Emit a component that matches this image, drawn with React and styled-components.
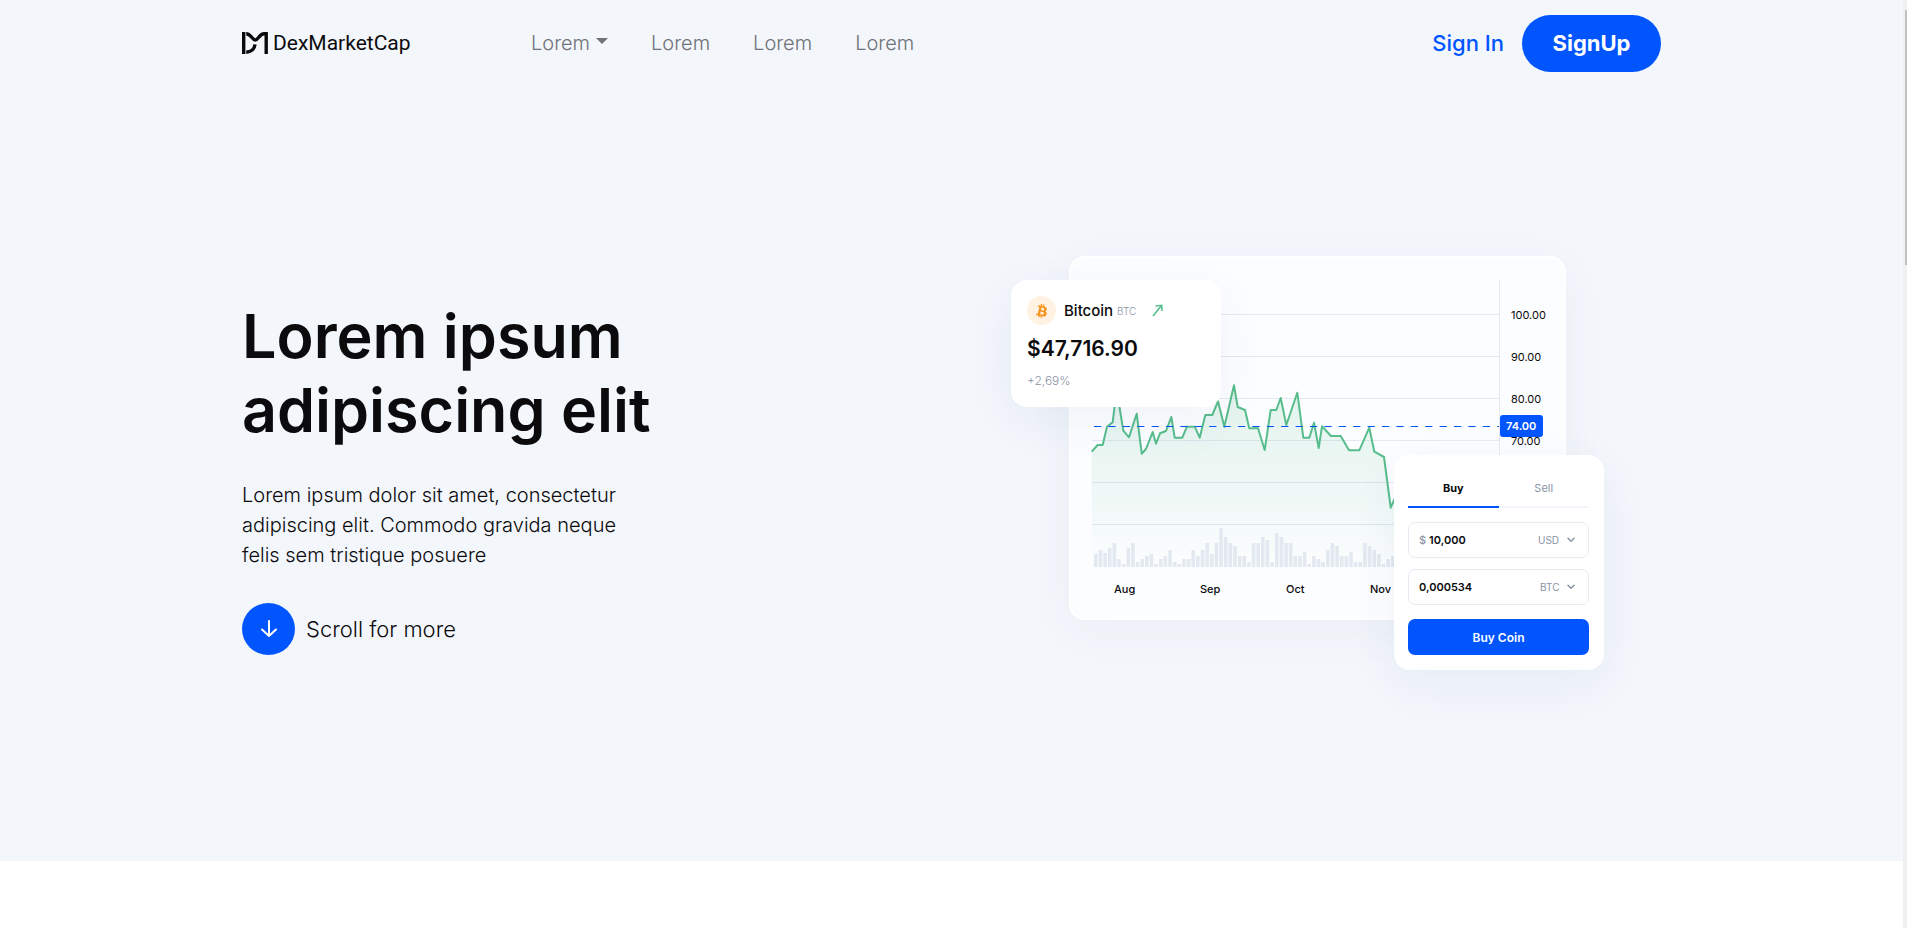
import React from 'react';
import styled, { createGlobalStyle } from 'styled-components';
import { FaBtc } from 'react-icons/fa';

const blue = '#0055ff';
const ink = '#0b0b0d';
const muted = '#8a94a6';

const GlobalStyle = createGlobalStyle`
  *, *::before, *::after { box-sizing: border-box; }
  body {
    margin: 0;
    background: #fff;
    color: ${ink};
    font-family: Inter, "Liberation Sans", sans-serif;
  }
  button, input, select { font-family: inherit; }
  a { color: inherit; text-decoration: none; }
`;

const Page = styled.div`
  margin-right: 4px;
`;

const ScrollTrack = styled.div`
  position: fixed;
  inset: 0 0 0 auto;
  width: 4px;
  padding: 10px 0 0 2px;
  background: #f1f1f1;
`;

const ScrollThumb = styled.div`
  height: 255px;
  background: #c1c1c1;
`;

const Banner = styled.div`
  background: #f3f6fb;
`;

const Container = styled.div`
  max-width: 1419px;
  margin: 0 auto;
`;

const Header = styled(Container).attrs({ as: 'header' })`
  display: flex;
  align-items: center;
  height: 86px;
`;

const Brand = styled.a`
  display: flex;
  align-items: center;
  gap: 5px;
  width: 289px;
  font-family: Roboto, sans-serif;
  font-size: 21px;
  line-height: 24px;
`;

const Nav = styled.nav`
  display: flex;
  align-items: center;
  gap: 43px;
`;

const NavLink = styled.a`
  display: flex;
  align-items: center;
  gap: 6px;
  font-size: 20px;
  line-height: 24px;
  font-weight: 300;
  color: #6f7278;
`;

const Caret = styled.span`
  margin-bottom: 4px;
  border: 6px solid transparent;
  border-top-color: #6f7278;
  border-bottom: 0;
`;

const Account = styled.div`
  display: flex;
  align-items: center;
  gap: 18px;
  margin-left: auto;
`;

const SignIn = styled.a`
  font-size: 22px;
  line-height: 28px;
  font-weight: 500;
  color: ${blue};
`;

const SignUp = styled.button`
  width: 139px;
  height: 57px;
  border: 0;
  border-radius: 29px;
  background: ${blue};
  color: #fff;
  font-size: 22px;
  line-height: 28px;
  font-weight: 700;
  padding: 0;
`;

const Hero = styled(Container).attrs({ as: 'main' })`
  display: grid;
  grid-template-columns: 1fr 1fr;
  align-items: start;
  padding: 170px 0 191px;
`;

const Intro = styled.section`
  padding-top: 43px;
`;

const Title = styled.h1`
  max-width: 480px;
  margin: 0 0 33px;
  font-size: 61px;
  line-height: 74px;
  font-weight: 600;
`;

const Lead = styled.p`
  max-width: 400px;
  margin: 0 0 33px;
  font-size: 20px;
  line-height: 30px;
  font-weight: 300;
`;

const ScrollLink = styled.a`
  display: inline-flex;
  align-items: center;
  gap: 11px;
  font-size: 22px;
  line-height: 28px;
  font-weight: 300;
`;

const RoundIcon = styled.span`
  display: grid;
  place-items: center;
  width: 53px;
  height: 52px;
  border-radius: 50%;
  background: ${blue};
`;

const Illustration = styled.section`
  position: relative;
  justify-self: end;
  width: 593px;
  margin-right: 57px;
  padding: 0 38px 50px 58px;
`;

const ChartCard = styled.div`
  height: 364px;
  border-radius: 16px;
  background: #fcfdff;
  box-shadow: inset 0 0 0 2px #fff, 0 10px 50px rgba(40, 70, 130, 0.04);
  overflow: hidden;
`;

const ChartSvg = styled.svg`
  display: block;
  width: 100%;
  height: 100%;
`;

const AxisText = styled.text`
  font-size: 11px;
  font-weight: ${(p) => p.$weight || 400};
  fill: ${(p) => p.$fill || ink};
`;

const FloatingCard = styled.div`
  position: absolute;
  width: 210px;
  border-radius: 16px;
  background: #fff;
  box-shadow: 0 14px 48px rgba(40, 70, 130, 0.06);
`;

const PriceCard = styled(FloatingCard)`
  top: 24px;
  left: 0;
  height: 127px;
  padding: 16px;
`;

const CoinRow = styled.div`
  display: flex;
  align-items: center;
`;

const CoinBadge = styled.span`
  display: grid;
  place-items: center;
  width: 29px;
  height: 29px;
  margin-right: 8px;
  border-radius: 50%;
  background: #fff2e3;
  color: #f7931a;

  svg { transform: rotate(12deg); }
`;

const CoinName = styled.span`
  font-size: 15px;
  line-height: 20px;
  font-weight: 500;
  margin-right: 4px;
`;

const CoinCode = styled.span`
  font-size: 10px;
  line-height: 20px;
  font-weight: 300;
  color: ${muted};
  margin-right: 16px;
`;

const Price = styled.div`
  margin-top: 10px;
  font-size: 21px;
  line-height: 28px;
  font-weight: 600;
`;

const Change = styled.div`
  margin-top: 8px;
  font-size: 12px;
  line-height: 20px;
  font-weight: 300;
  color: ${muted};
`;

const TradeCard = styled(FloatingCard).attrs({ as: 'form' })`
  right: 0;
  bottom: 0;
  height: 215px;
  padding: 14px 15px 15px 14px;
`;

const Tabs = styled.div`
  display: grid;
  grid-template-columns: 1fr 1fr;
  margin-bottom: 14px;
`;

const Tab = styled.button`
  height: 39px;
  padding: 0;
  border: 0;
  border-bottom: 2px solid ${(p) => (p.$active ? blue : '#f3f6fb')};
  background: none;
  font-size: 11px;
  font-weight: ${(p) => (p.$active ? 700 : 400)};
  color: ${(p) => (p.$active ? ink : muted)};
`;

const Field = styled.div`
  display: flex;
  align-items: center;
  height: 36px;
  margin-bottom: ${(p) => (p.$last ? 14 : 11)}px;
  padding: 0 13px 0 10px;
  border: 1px solid #e6ebf4;
  border-radius: 7px;
  font-size: 11px;
`;

const Prefix = styled.label`
  margin-right: 3px;
  font-weight: 500;
  color: ${muted};
`;

const Amount = styled.input`
  flex: 1;
  min-width: 0;
  padding: 0;
  border: 0;
  outline: 0;
  background: none;
  color: ${ink};
  font-size: 11px;
  font-weight: 600;
`;

const Currency = styled.select`
  appearance: none;
  padding: 0;
  border: 0;
  background: none;
  color: ${muted};
  font-size: 10px;
  font-weight: 400;
  margin-right: 7px;
`;

const BuyButton = styled.button`
  width: 100%;
  height: 36px;
  padding: 0;
  border: 0;
  border-radius: 7px;
  background: ${blue};
  color: #fff;
  font-size: 12px;
  font-weight: 600;
`;

const gridLines = [58, 100, 142, 184, 226, 268];
const priceLabels = ['100.00', '90.00', '80.00', '70.00'];
const months = [
  ['Aug', 45],
  ['Sep', 131],
  ['Oct', 217],
  ['Nov', 301],
];

const line = [
  [22.7, 195.7], [28.7, 189], [33.7, 189], [38, 170.7], [43.7, 166.3], [45.7, 149], [48.3, 138], [50.3, 150],
  [54.3, 174.7], [60, 181.3], [67.7, 157.7], [72.7, 197.7], [77, 193], [83.7, 176], [87, 187.7], [91, 177.3],
  [97, 175], [102.3, 161], [105.7, 181.7], [113.3, 181.7], [118, 170.7], [125.7, 170.7], [130.7, 181.7],
  [136.3, 159], [143.3, 159], [149, 145.3], [155.3, 170.7], [165, 129.3], [168.7, 151], [176, 154],
  [180.3, 172.3], [189, 172.3], [195.7, 194], [201.7, 154], [207.3, 154], [211.7, 142], [217.3, 169],
  [228.3, 136.7], [234.3, 181.7], [240.3, 181.7], [245, 166.7], [249.7, 192], [253, 170.3], [262, 180],
  [271.7, 180], [280, 194.3], [290.3, 194.3], [300.3, 171.7], [305.3, 195.7], [315, 201], [321.7, 251.7],
  [327, 240], [333, 236],
];

const volumes = [
  13, 17, 14, 19, 24, 8, 3, 19, 24, 5, 8, 11, 13, 3, 8, 11, 17, 5, 3, 8, 8, 17, 11, 17, 24, 13, 24, 39, 30, 24, 21,
  11, 11, 5, 24, 24, 30, 27, 5, 34, 30, 24, 24, 11, 11, 15, 3, 11, 8, 5, 17, 24, 21, 11, 11, 15, 5, 5, 24, 21, 17,
  13, 3, 8, 11,
];

const path = line.map((p) => p.join(',')).join(' L');

function Logo() {
  return (
    <svg width="26" height="22" viewBox="0 0 26 22" fill="none" stroke={ink} strokeWidth="3.4" aria-hidden="true">
      <path d="M1.7 0V22" />
      <path d="M4.2 1.7C9 1.7 10 8 13.2 8S17.5 1.7 22 1.7H24.2V22" />
      <path d="M4.2 20.2C9 19.8 12.6 17 13 12.4" />
    </svg>
  );
}

function Chevron() {
  return (
    <svg width="8" height="6" viewBox="0 0 8 6" fill="none" stroke={muted} strokeWidth="1.5" aria-hidden="true">
      <path d="M1 1.2L4 4.2L7 1.2" strokeLinecap="round" strokeLinejoin="round" />
    </svg>
  );
}

function PriceChart() {
  return (
    <ChartSvg viewBox="0 0 497 364" role="img" aria-label="Bitcoin price history">
      <defs>
        <linearGradient id="area" x1="0" y1="0" x2="0" y2="1">
          <stop offset="0" stopColor="#58bd8c" stopOpacity="0.15" />
          <stop offset="0.6" stopColor="#58bd8c" stopOpacity="0.08" />
          <stop offset="1" stopColor="#58bd8c" stopOpacity="0" />
        </linearGradient>
      </defs>
      <g fill="#e4e9f2">
        {gridLines.map((y) => (
          <rect key={y} x="23" y={y} width="407" height="1" />
        ))}
        <rect x="430" y="24" width="1" height="287" />
      </g>
      <path d={`M${path} L333,311 L22.7,311 Z`} fill="url(#area)" />
      <g fill="#e3e9f0">
        {volumes.map((h, i) => (
          <rect key={i} x={25 + i * 4.64} y={311 - h} width="3.6" height={h} />
        ))}
      </g>
      <path d={`M${path}`} fill="none" stroke="#58bd8c" strokeWidth="2" strokeLinejoin="round" />
      <path d="M25 170.5H430" stroke={blue} strokeDasharray="7.2 7.2" />
      {priceLabels.map((label, i) => (
        <AxisText key={label} x="442" y={63 + i * 42}>
          {label}
        </AxisText>
      ))}
      <rect x="431" y="159" width="43" height="22" rx="3" fill={blue} />
      <AxisText x="437" y="174" $weight={600} $fill="#fff">
        74.00
      </AxisText>
      {months.map(([name, x]) => (
        <AxisText key={name} x={x} y="337" $weight={500}>
          {name}
        </AxisText>
      ))}
    </ChartSvg>
  );
}

export default function App() {
  return (
    <>
      <GlobalStyle />
      <Page>
        <Banner>
          <Header>
            <Brand href="#">
              <Logo />
              DexMarketCap
            </Brand>
            <Nav>
              <NavLink href="#">
                Lorem
                <Caret />
              </NavLink>
              <NavLink href="#">Lorem</NavLink>
              <NavLink href="#">Lorem</NavLink>
              <NavLink href="#">Lorem</NavLink>
            </Nav>
            <Account>
              <SignIn href="#">Sign In</SignIn>
              <SignUp type="button">SignUp</SignUp>
            </Account>
          </Header>
          <Hero>
            <Intro>
              <Title>
                Lorem ipsum
                <br />
                adipiscing elit
              </Title>
              <Lead>
                Lorem ipsum dolor sit amet, consectetur
                <br />
                adipiscing elit. Commodo gravida neque
                <br />
                felis sem tristique posuere
              </Lead>
              <ScrollLink href="#">
                <RoundIcon>
                  <svg width="18" height="18" viewBox="0 0 18 18" fill="none" stroke="#fff" strokeWidth="2" aria-hidden="true">
                    <path d="M9 1V16M2 9.5L9 16L16 9.5" strokeLinecap="round" strokeLinejoin="round" />
                  </svg>
                </RoundIcon>
                Scroll for more
              </ScrollLink>
            </Intro>
            <Illustration>
              <ChartCard>
                <PriceChart />
              </ChartCard>
              <PriceCard>
                <CoinRow>
                  <CoinBadge>
                    <FaBtc size={14} />
                  </CoinBadge>
                  <CoinName>Bitcoin</CoinName>
                  <CoinCode>BTC</CoinCode>
                  <svg width="11" height="13" viewBox="0 0 11 13" fill="none" stroke="#58bd8c" strokeWidth="1.6" aria-hidden="true">
                    <path d="M1 12L9.5 1.5M3.5 2L9.7 1.3L10 7" />
                  </svg>
                </CoinRow>
                <Price>$47,716.90</Price>
                <Change>+2,69%</Change>
              </PriceCard>
              <TradeCard>
                <Tabs>
                  <Tab type="button" $active>
                    Buy
                  </Tab>
                  <Tab type="button">Sell</Tab>
                </Tabs>
                <Field>
                  <Prefix htmlFor="spend">$</Prefix>
                  <Amount id="spend" defaultValue="10,000" />
                  <Currency aria-label="Currency to spend">
                    <option>USD</option>
                  </Currency>
                  <Chevron />
                </Field>
                <Field $last>
                  <Amount aria-label="Amount to receive" defaultValue="0,000534" />
                  <Currency aria-label="Coin to receive">
                    <option>BTC</option>
                  </Currency>
                  <Chevron />
                </Field>
                <BuyButton type="button">Buy Coin</BuyButton>
              </TradeCard>
            </Illustration>
          </Hero>
        </Banner>
      </Page>
      <ScrollTrack>
        <ScrollThumb />
      </ScrollTrack>
    </>
  );
}
